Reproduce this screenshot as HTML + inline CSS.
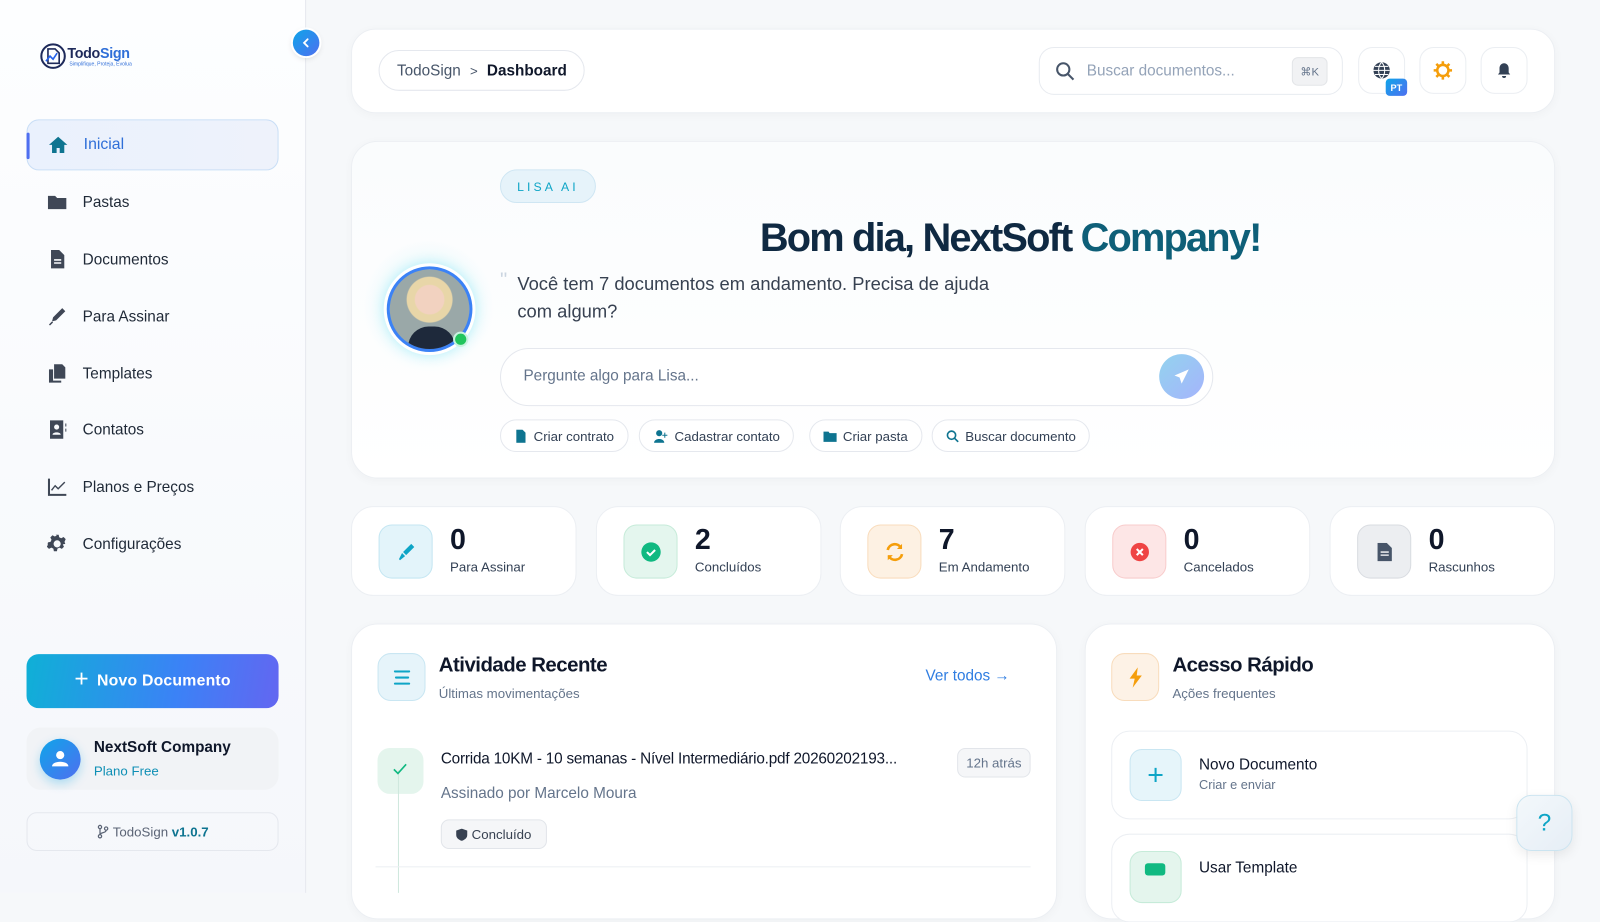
<!DOCTYPE html>
<html><head><meta charset="utf-8"><style>
*{box-sizing:border-box;margin:0;padding:0}
body{width:1600px;height:875px;overflow:hidden;font-family:"Liberation Sans",sans-serif;background:#f6f8fa;position:relative;color:#0f172a}
#w{position:absolute;left:0;top:0;width:1568px;height:858px;transform:scale(1.02041);transform-origin:0 0}
.abs{position:absolute}
.side{left:0;top:0;width:300px;height:875px;background:linear-gradient(180deg,#fdfeff,#f5f7fb);border-right:1px solid #e6e9ef}
.nav{position:absolute;left:26px;width:247px;height:50px;display:flex;align-items:center;padding-left:20px;font-size:15px;color:#1f2937}
.nav svg{width:20px;height:20px;margin-right:15px;fill:#3f4756}
.card{position:absolute;background:#fff;border:1px solid #eceff3;border-radius:26px;box-shadow:0 2px 10px rgba(15,23,42,.03)}
.ib{position:absolute;width:46px;height:46px;border:1px solid #ebeef2;border-radius:14px;background:#fff;display:flex;align-items:center;justify-content:center}
.chip{position:absolute;top:411px;height:32px;border:1px solid #e5e8ee;border-radius:16px;display:flex;align-items:center;padding:0 13px;font-size:13px;color:#334155;background:#fff}
.chip svg{width:13px;height:13px;margin-right:6px;fill:#0e7490}
.stat{position:absolute;top:496px;width:221px;height:88px;background:#fff;border:1px solid #eceff3;border-radius:22px}
.stat .ic{position:absolute;left:26px;top:17px;width:53px;height:53px;border-radius:13px;display:flex;align-items:center;justify-content:center}
.stat .n{position:absolute;left:96px;top:16px;font-size:28px;font-weight:bold;color:#0f172a}
.stat .l{position:absolute;left:96px;top:51px;font-size:13px;color:#334155}
</style></head><body><div id="w">
<div class="abs side"></div>
<svg class="abs" style="left:39px;top:42px" width="26" height="26" viewBox="0 0 26 26"><circle cx="13" cy="13" r="11.5" fill="none" stroke="#1e2a5a" stroke-width="2"/><path d="M8 6h7l4 4v10H8z" fill="none" stroke="#1e2a5a" stroke-width="1.6"/><path d="M6 18l4-5 3 3 4-6" fill="none" stroke="#2563eb" stroke-width="1.6"/></svg>
<div class="abs" style="left:66px;top:44px;font-size:14px;font-weight:bold;color:#1e2a5a;letter-spacing:-.3px">Todo<span style="color:#2f6fd8">Sign</span></div>
<div class="abs" style="left:68px;top:60px;font-size:5px;color:#2f6fd8">Simplifique, Proteja, Evolua</div>
<div class="abs" style="left:287px;top:29px;width:26px;height:26px;border-radius:50%;background:linear-gradient(135deg,#0ea5e9,#4f6ff0);box-shadow:0 0 0 2px #fff,0 2px 6px rgba(0,0,0,.15);display:flex;align-items:center;justify-content:center"><svg width="12" height="12" viewBox="0 0 12 12"><path d="M7.5 2.5L4 6l3.5 3.5" stroke="#fff" stroke-width="1.8" fill="none" stroke-linecap="round"/></svg></div>

<div class="nav" style="top:117px;background:linear-gradient(90deg,#eaf1fd,#eef2fb);border:1px solid #c9def6;border-radius:12px;color:#2f6fd8;font-size:15.5px"><div class="abs" style="left:-1px;top:12px;width:3px;height:26px;background:#4f6ff0;border-radius:2px"></div><svg viewBox="0 0 20 20" style="fill:#0e7490"><path d="M10 2L1 10h3v8h4.5v-5h3v5H16v-8h3z"/></svg>Inicial</div>
<div class="nav" style="top:173px"><svg viewBox="0 0 20 20"><path d="M1 4h7l2 2h9v11H1z"/></svg>Pastas</div>
<div class="nav" style="top:229px"><svg viewBox="0 0 20 20"><path d="M4 1h8l5 5v13H4z M7 10h7v1.5H7z M7 13h7v1.5H7z" fill-rule="evenodd"/></svg>Documentos</div>
<div class="nav" style="top:285px"><svg viewBox="0 0 20 20"><path d="M15 2l3 3-9 9-4 1 1-4z M2 18l3-3 1 1-3 3z"/></svg>Para Assinar</div>
<div class="nav" style="top:341px"><svg viewBox="0 0 20 20"><path d="M7 1h8l3 3v11H7z M2 6h4v11h8v2H2z"/></svg>Templates</div>
<div class="nav" style="top:396px"><svg viewBox="0 0 20 20"><path d="M3 1h13v18H3z M18 4h1v3h-1z M18 9h1v3h-1z M9.5 5a2.5 2.5 0 110 5 2.5 2.5 0 010-5z M5.5 15c0-3 8-3 8 0z" fill-rule="evenodd"/></svg>Contatos</div>
<div class="nav" style="top:452px"><svg viewBox="0 0 20 20"><path d="M1 2h2v15h16v2H1z M4 13l4-5 3 3 6-6 1 1-7 7-3-3-3 4z"/></svg>Planos e Preços</div>
<div class="nav" style="top:508px"><svg viewBox="0 0 20 20"><path d="M10 6.5a3.5 3.5 0 100 7 3.5 3.5 0 000-7zM8.5 1h3l.5 2.5 2 1 2.3-1.2 2.1 2.1L17.2 8l.8 2-2.5.5 1.2 2.3-2.1 2.1-2.3-1.2-2 1-.5 2.5h-3l-.5-2.5-2-1-2.3 1.2-2.1-2.1 1.2-2.3-1-2L1 11.5v-3l2.5-.5 1-2-1.2-2.3 2.1-2.1 2.3 1.2 2-1z" fill-rule="evenodd"/></svg>Configurações</div>

<div class="abs" style="left:26px;top:641px;width:247px;height:53px;border-radius:12px;background:linear-gradient(100deg,#0fb0d6,#3b82f6 60%,#6366f1);color:#fff;font-size:15.5px;font-weight:bold;display:flex;align-items:center;justify-content:center;letter-spacing:.2px"><span style="font-size:24px;font-weight:normal;margin-right:8px;margin-top:-3px">+</span>Novo Documento</div>
<div class="abs" style="left:26px;top:713px;width:247px;height:61px;border-radius:14px;background:#f1f3f6"></div>
<div class="abs" style="left:39px;top:724px;width:40px;height:40px;border-radius:50%;background:linear-gradient(135deg,#0ea5e9,#4f6ff0);box-shadow:0 4px 10px rgba(14,165,233,.3)"><svg width="40" height="40" viewBox="0 0 40 40"><circle cx="20" cy="16" r="4" fill="#fff"/><path d="M12 27c0-6 16-6 16 0z" fill="#fff"/></svg></div>
<div class="abs" style="left:92px;top:724px;font-size:15px;font-weight:bold;color:#0f172a">NextSoft Company</div>
<div class="abs" style="left:92px;top:748px;font-size:13px;color:#0e8fb5">Plano Free</div>
<div class="abs" style="left:26px;top:796px;width:247px;height:38px;border:1px solid #e5e8ee;border-radius:10px;display:flex;align-items:center;justify-content:center;font-size:13px;color:#5b6475"><svg width="12" height="14" viewBox="0 0 12 14" style="margin-right:4px"><circle cx="3" cy="2.5" r="1.6" fill="none" stroke="#5b6475" stroke-width="1.2"/><circle cx="3" cy="11.5" r="1.6" fill="none" stroke="#5b6475" stroke-width="1.2"/><circle cx="9" cy="4" r="1.6" fill="none" stroke="#5b6475" stroke-width="1.2"/><path d="M3 4v6M9 5.6c0 3-6 2-6 4.3" fill="none" stroke="#5b6475" stroke-width="1.2"/></svg>TodoSign&nbsp;<b style="color:#0e7490">v1.0.7</b></div>

<div class="card" style="left:344px;top:28px;width:1180px;height:83px;border-radius:24px"></div>
<div class="abs" style="left:371px;top:49px;width:202px;height:40px;border:1px solid #e5e8ee;border-radius:20px;display:flex;align-items:center;padding-left:17px;font-size:15px;color:#475569">TodoSign <span style="margin:0 9px;font-size:13px">&gt;</span><b style="color:#0f172a">Dashboard</b></div>
<div class="abs" style="left:1018px;top:46px;width:298px;height:47px;border:1px solid #e8ebf0;border-radius:15px;display:flex;align-items:center;padding-left:15px;font-size:15px;color:#94a3b8"><svg width="20" height="20" viewBox="0 0 20 20" style="margin-right:11px"><circle cx="8" cy="8" r="6" fill="none" stroke="#475569" stroke-width="2"/><path d="M12.5 12.5L18 18" stroke="#475569" stroke-width="2"/></svg>Buscar documentos...<div class="abs" style="left:247px;top:9px;width:35px;height:28px;background:#f1f2f4;border:1px solid #e3e5e8;border-radius:6px;font-size:11px;color:#64748b;display:flex;align-items:center;justify-content:center">⌘K</div></div>
<div class="ib" style="left:1331px;top:46px"><svg width="18" height="18" viewBox="0 0 18 18"><circle cx="9" cy="9" r="8" fill="#334155"/><path d="M1 9h16M9 1c-4 4-4 12 0 16M9 1c4 4 4 12 0 16M2.5 5h13M2.5 13h13" stroke="#fff" stroke-width="1" fill="none"/></svg><div class="abs" style="left:26px;top:30px;width:21px;height:17px;border-radius:4px;background:linear-gradient(135deg,#0ea5e9,#4f6ff0);color:#fff;font-size:9px;font-weight:bold;display:flex;align-items:center;justify-content:center">PT</div></div>
<div class="ib" style="left:1391px;top:46px"><svg width="20" height="20" viewBox="0 0 20 20"><circle cx="10" cy="10" r="5.5" fill="none" stroke="#f59e0b" stroke-width="2.5"/><g stroke="#f59e0b" stroke-width="2.5"><path d="M10 1v3M10 16v3M1 10h3M16 10h3M3.6 3.6l2 2M14.4 14.4l2 2M3.6 16.4l2-2M14.4 5.6l2-2"/></g></svg></div>
<div class="ib" style="left:1451px;top:46px"><svg width="16" height="16" viewBox="0 0 16 16"><path d="M8 1c3 0 4.5 2.5 4.5 5v4l1.5 2H2l1.5-2V6C3.5 3.5 5 1 8 1z M6 13.5h4a2 2 0 01-4 0z" fill="#334155"/></svg></div>

<div class="card" style="left:344px;top:138px;width:1180px;height:331px;background:linear-gradient(180deg,#fafcfd,#fff)"></div>
<div class="abs" style="left:490px;top:166px;width:94px;height:33px;border-radius:17px;background:#e6f3fa;border:1px solid #cfe6f3;color:#0ea5c6;font-size:12px;letter-spacing:3px;display:flex;align-items:center;justify-content:center">LISA AI</div>
<div class="abs" style="left:600px;top:212px;width:780px;text-align:center;font-size:39px;font-weight:bold;letter-spacing:-1.8px;color:#0f2942">Bom dia, NextSoft <span style="color:#0e5f78">Company!</span></div>
<div class="abs" style="left:350px;top:230px;width:140px;height:140px;border-radius:50%;background:radial-gradient(circle,rgba(34,211,238,.18),rgba(255,255,255,0) 65%)"></div>
<div class="abs" style="left:376px;top:258px;width:90px;height:90px;border-radius:50%;background:#fff;box-shadow:0 0 12px rgba(34,211,238,.3)"></div>
<div class="abs" style="left:379px;top:261px;width:84px;height:84px;border-radius:50%;border:3px solid #3b82f6;background:radial-gradient(circle at 50% 38%,#f2d2c0 0 14px,#e8d6a8 15px 22px,#9aa8a8 23px);overflow:hidden"><div class="abs" style="left:18px;top:56px;width:46px;height:30px;background:#1e293b;border-radius:20px 20px 0 0"></div></div>
<div class="abs" style="left:444px;top:325px;width:15px;height:15px;border-radius:50%;background:#22c55e;border:2.5px solid #c9f3e0"></div>
<div class="abs" style="left:490px;top:264px;font-size:20px;color:#cbd5e1">"</div>
<div class="abs" style="left:507px;top:265px;width:495px;font-size:18px;line-height:27px;color:#374151">Você tem 7 documentos em andamento. Precisa de ajuda com algum?</div>
<div class="abs" style="left:490px;top:341px;width:699px;height:57px;border:1px solid #e5e8ee;border-radius:29px;background:#fff;font-size:15px;color:#64748b;padding:18px 0 0 22px">Pergunte algo para Lisa...</div>
<div class="abs" style="left:1136px;top:347px;width:44px;height:44px;border-radius:50%;background:linear-gradient(135deg,#93d3ee,#a5b4fc);display:flex;align-items:center;justify-content:center"><svg width="18" height="18" viewBox="0 0 18 18"><path d="M16 2L2 8l5 2 2 6z" fill="#fff"/></svg></div>
<div class="chip" style="left:490px"><svg viewBox="0 0 13 13"><path d="M2 0h6l3 3v10H2z"/></svg>Criar contrato</div>
<div class="chip" style="left:626px"><svg viewBox="0 0 13 13" style="width:15px"><circle cx="5" cy="3.5" r="3"/><path d="M0 13c0-5 10-5 10 0z M10 3h1v2h2v1h-2v2h-1V6H8V5h2z"/></svg>Cadastrar contato</div>
<div class="chip" style="left:793px"><svg viewBox="0 0 13 13"><path d="M0 2h5l1 1.5h7V12H0z"/></svg>Criar pasta</div>
<div class="chip" style="left:913px"><svg viewBox="0 0 13 13"><circle cx="5.5" cy="5.5" r="4" fill="none" stroke="#0e7490" stroke-width="1.6"/><path d="M8.5 8.5L12 12" stroke="#0e7490" stroke-width="1.6"/></svg>Buscar documento</div>

<div class="stat" style="left:344px"><div class="ic" style="background:#e3f4fa;border:1px solid #c4e6f2"><svg width="20" height="20" viewBox="0 0 20 20"><path d="M15 2l3 3-8 8-3-3z M6 11l3 3-5 4-1-1z" fill="#0ea5c6"/></svg></div><div class="n">0</div><div class="l">Para Assinar</div></div>
<div class="stat" style="left:584px"><div class="ic" style="background:#e4f6ee;border:1px solid #c6ebd9"><svg width="20" height="20" viewBox="0 0 20 20"><circle cx="10" cy="10" r="9.5" fill="#10b981"/><path d="M6 10l3 3 5-5" stroke="#fff" stroke-width="2" fill="none"/></svg></div><div class="n">2</div><div class="l">Concluídos</div></div>
<div class="stat" style="left:823px"><div class="ic" style="background:#fdf1e3;border:1px solid #f9dcbc"><svg width="22" height="22" viewBox="0 0 22 22"><path d="M4 9a7 7 0 0113-2M18 13a7 7 0 01-13 2" stroke="#f59e0b" stroke-width="2.6" fill="none"/><path d="M18 3v5h-5zM4 19v-5h5z" fill="#f59e0b"/></svg></div><div class="n">7</div><div class="l">Em Andamento</div></div>
<div class="stat" style="left:1063px"><div class="ic" style="background:#fde6e6;border:1px solid #f8cccc"><svg width="20" height="20" viewBox="0 0 20 20"><circle cx="10" cy="10" r="9" fill="#ef4444"/><path d="M7 7l6 6M13 7l-6 6" stroke="#fff" stroke-width="2"/></svg></div><div class="n">0</div><div class="l">Cancelados</div></div>
<div class="stat" style="left:1303px"><div class="ic" style="background:#eceef1;border:1px solid #d9dce1"><svg width="16" height="18" viewBox="0 0 16 18"><path d="M1 0h9l5 5v13H1z" fill="#475569"/><path d="M4 9h8M4 12h8" stroke="#fff" stroke-width="1.3"/></svg></div><div class="n">0</div><div class="l">Rascunhos</div></div>

<div class="card" style="left:344px;top:611px;width:692px;height:290px"></div>
<div class="abs" style="left:370px;top:640px;width:47px;height:47px;border-radius:13px;background:#e6f4fa;border:1px solid #c9e6f2;display:flex;align-items:center;justify-content:center"><svg width="18" height="14" viewBox="0 0 18 14"><path d="M2 1h14M3 7h12M2 13h14" stroke="#0ea5c6" stroke-width="2" stroke-linecap="round"/></svg></div>
<div class="abs" style="left:430px;top:641px;font-size:20px;font-weight:bold;letter-spacing:-.5px">Atividade Recente</div>
<div class="abs" style="left:430px;top:672px;font-size:13px;color:#64748b">Últimas movimentações</div>
<div class="abs" style="left:907px;top:654px;font-size:15px;color:#2f7de1">Ver todos →</div>
<div class="abs" style="left:370px;top:733px;width:45px;height:45px;border-radius:12px;background:#e4f5ed"></div>
<div class="abs" style="left:390px;top:755px;width:1px;height:120px;background:#cfe8de"></div>
<svg class="abs" style="left:384px;top:747px" width="16" height="14" viewBox="0 0 16 14"><path d="M2 7l4 4 8-9" stroke="#10b981" stroke-width="1.6" fill="none"/></svg>
<div class="abs" style="left:432px;top:735px;font-size:15px;color:#0f172a;letter-spacing:-.2px">Corrida 10KM - 10 semanas - Nível Intermediário.pdf 20260202193...</div>
<div class="abs" style="left:938px;top:733px;width:72px;height:29px;border:1px solid #e2e5ea;border-radius:8px;background:#f5f6f8;font-size:13px;color:#64748b;display:flex;align-items:center;justify-content:center">12h atrás</div>
<div class="abs" style="left:432px;top:769px;font-size:15px;color:#64748b">Assinado por Marcelo Moura</div>
<div class="abs" style="left:432px;top:803px;width:104px;height:29px;border:1px solid #e2e5ea;border-radius:8px;background:#f5f6f8;font-size:13px;color:#374151;display:flex;align-items:center;justify-content:center"><svg width="11" height="12" viewBox="0 0 11 12" style="margin-right:4px"><path d="M5.5 0L11 2v4c0 3-2.5 5-5.5 6C2.5 11 0 9 0 6V2z" fill="#374151"/></svg>Concluído</div>
<div class="abs" style="left:368px;top:849px;width:642px;height:1px;background:#eceff3"></div>

<div class="card" style="left:1063px;top:611px;width:461px;height:290px"></div>
<div class="abs" style="left:1089px;top:640px;width:47px;height:47px;border-radius:13px;background:#fdf2e6;border:1px solid #f8dcbc;display:flex;align-items:center;justify-content:center"><svg width="14" height="20" viewBox="0 0 14 20"><path d="M9 0L1 11h5l-2 9 9-12H8z" fill="#f59e0b"/></svg></div>
<div class="abs" style="left:1149px;top:641px;font-size:20px;font-weight:bold;letter-spacing:-.5px">Acesso Rápido</div>
<div class="abs" style="left:1149px;top:672px;font-size:13px;color:#64748b">Ações frequentes</div>
<div class="abs" style="left:1089px;top:716px;width:408px;height:87px;border:1px solid #eceff3;border-radius:18px;background:#fff"></div>
<div class="abs" style="left:1107px;top:734px;width:51px;height:51px;border-radius:12px;background:#e6f5fa;border:1px solid #c9e6f2;color:#0ea5c6;font-size:28px;display:flex;align-items:center;justify-content:center">+</div>
<div class="abs" style="left:1175px;top:741px;font-size:15px;color:#0f172a">Novo Documento</div>
<div class="abs" style="left:1175px;top:762px;font-size:12.5px;color:#64748b">Criar e enviar</div>
<div class="abs" style="left:1089px;top:817px;width:408px;height:87px;border:1px solid #eceff3;border-radius:18px;background:#fff"></div>
<div class="abs" style="left:1107px;top:834px;width:51px;height:51px;border-radius:12px;background:#e4f5ed;border:1px solid #c6ebd9"></div>
<div class="abs" style="left:1122px;top:846px;width:20px;height:12px;background:#10b981;border-radius:3px"></div>
<div class="abs" style="left:1175px;top:842px;font-size:15px;color:#0f172a">Usar Template</div>
<div class="abs" style="left:1486px;top:779px;width:55px;height:55px;border-radius:15px;background:linear-gradient(135deg,#f3f8fb,#e6eef6);border:1px solid #cbe4f0;box-shadow:0 4px 12px rgba(0,0,0,.08);color:#0ea5c6;font-size:24px;display:flex;align-items:center;justify-content:center">?</div>
</div></body></html>
